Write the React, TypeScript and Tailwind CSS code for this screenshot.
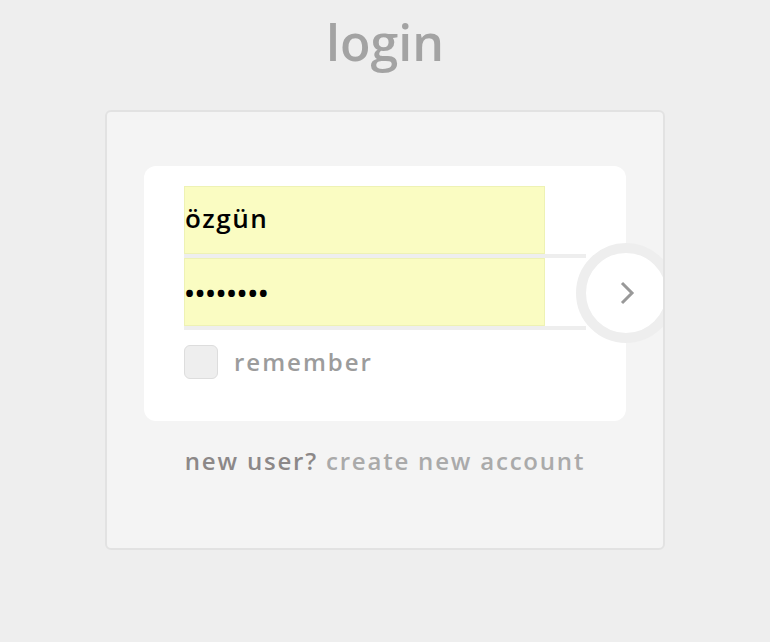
import React from "react";

const font = { fontFamily: '"Open Sans", "DejaVu Sans", sans-serif' };

const LoginPage: React.FC = (): JSX.Element => {
    return (
        <div className="min-h-screen bg-[#eeeeee] flex flex-col items-center" style={font}>
            <h1 className="mt-[10px] h-[100px] text-[50px] font-semibold text-[#a3a3a3] leading-[64px]">
                login
            </h1>

            <div className="w-[560px] h-[440px] rounded-md border-2 border-[#e2e2e2] bg-[#f4f4f4] pt-[54px] px-[37px] overflow-hidden">
                <div className="relative w-[482px] h-[255px] rounded-xl bg-white pt-[20px] px-[40px]">
                    {/* username */}
                    <div className="w-[402px] border-b-4 border-[#eeeeee]">
                        <input
                            className="block w-[361px] h-[68px] pb-[4px] bg-[#fafcc2] border border-[#eef2b4] text-[26px] font-semibold tracking-[1.5px] text-black outline-none"
                            defaultValue="özgün"
                            readOnly
                        />
                    </div>
                    {/* password */}
                    <div className="w-[402px] border-b-4 border-[#eeeeee]">
                        <input
                            className="block w-[361px] h-[68px] bg-[#fafcc2] border border-[#eef2b4] text-[24px] font-bold tracking-[1.5px] text-black outline-none"
                            defaultValue="••••••••"
                            readOnly
                        />
                    </div>

                    <label className="mt-[14px] flex items-center gap-4">
                        <span className="w-[34px] h-[34px] rounded-md bg-[#eeeeee] border border-[#dddddd]" />
                        <span className="text-[24px] font-semibold tracking-[2px] text-[#9c9c9c]">remember</span>
                    </label>

                    {/* submit */}
                    <button className="absolute left-[432px] top-[77px] w-[100px] h-[100px] rounded-full border-[10px] border-[#eeeeee] bg-white flex items-center justify-center">
                        <svg width="18" height="26" viewBox="0 0 18 26" className="ml-[2px]">
                            <polyline points="4,3 14,13 4,23" fill="none" stroke="#999999" strokeWidth="3" />
                        </svg>
                    </button>
                </div>

                <div className="mt-[22px] text-center text-[24px] font-semibold tracking-[1.8px]">
                    <span className="text-[#8c8888]">new user? </span>
                    <a className="text-[#aaaaaa]">create new account</a>
                </div>
            </div>
        </div>
    );
};

export default function App() {
    return <LoginPage />;
}
